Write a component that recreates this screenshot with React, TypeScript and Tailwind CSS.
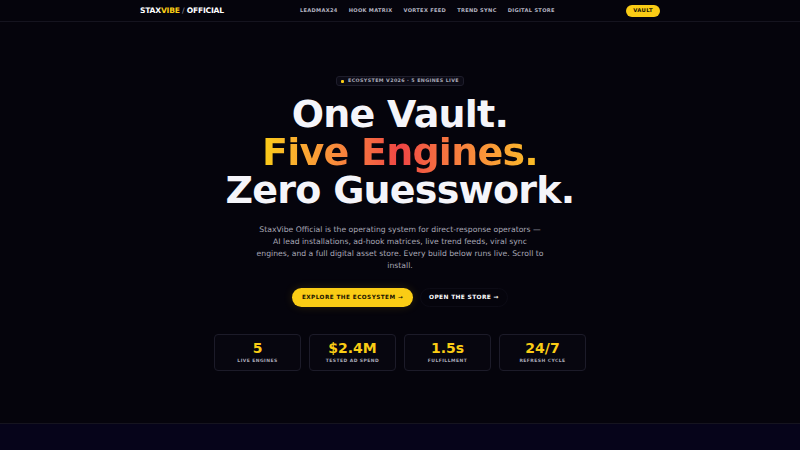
import React from "react";

const navLinks = ["LeadMax24", "Hook Matrix", "Vortex Feed", "Trend Sync", "Digital Store"];

const stats = [
  { value: "5", label: "Live Engines" },
  { value: "$2.4M", label: "Tested Ad Spend" },
  { value: "1.5s", label: "Fulfillment" },
  { value: "24/7", label: "Refresh Cycle" },
];

const App: React.FC = () => {
  return (
    <div className="min-h-[450px] w-full overflow-hidden bg-[#05040c] text-white font-['DejaVu_Sans',sans-serif]">
      {/* Top bar */}
      <header className="h-[22px] border-b border-[#15141f] flex items-center pl-[140px] pr-[140px]">
        <div className="w-[84px] whitespace-nowrap text-[7.6px] font-bold tracking-[-0.03em] leading-none">
          STAX<span className="text-[#facc15]">VIBE</span> <span className="text-[#8a8a99] font-normal">/</span> OFFICIAL
        </div>
        <nav className="flex items-center gap-[11px] ml-[76px]">
          {navLinks.map((l) => (
            <span key={l} className="text-[5.1px] font-bold uppercase tracking-[0.06em] text-[#b4b4c2] leading-none">
              {l}
            </span>
          ))}
        </nav>
        <div className="ml-auto h-[12px] px-[7px] rounded-full bg-[#facc15] flex items-center text-[5.3px] font-bold tracking-[0.06em] text-[#1a1400] leading-none">
          VAULT
        </div>
      </header>

      {/* Hero */}
      <section className="flex flex-col items-center pt-[54px] h-[401px]">
        <div className="flex items-center gap-[4px] h-[10px] px-[4px] rounded-[3px] border border-[#1e1d2b] bg-[#0c0b16] text-[4.8px] font-bold tracking-[0.08em] text-[#a9a9b8] leading-none">
          <span className="w-[3px] h-[3px] bg-[#facc15] rounded-[1px]" />
          ECOSYSTEM V2026 · 5 ENGINES LIVE
        </div>

        <h1 className="mt-[9px] text-center text-[38px] leading-[38px] font-bold tracking-[-0.02em]">
          <span className="block text-[#f5f5fa]">One Vault.</span>
          <span className="block">
            <span className="bg-gradient-to-r from-[#facc15] via-[#ef4444] to-[#fbbf24] bg-clip-text text-transparent">
              Five Engines.
            </span>
          </span>
          <span className="block text-[#f5f5fa]">Zero Guesswork.</span>
        </h1>

        <p className="mt-[15px] w-[291px] text-center text-[7.7px] leading-[12px] text-[#a7a7b6]">
          StaxVibe Official is the operating system for direct-response operators — AI lead installations, ad-hook matrices, live trend feeds, viral sync engines,{"\u00a0"}and a full digital asset store. Every build below runs live. Scroll to install.
        </p>

        <div className="mt-[16px] flex items-center gap-[7px]">
          <div className="h-[19px] w-[121px] rounded-full bg-[#facc15] flex items-center justify-center text-[5.7px] font-bold tracking-[0.08em] text-[#1a1400] leading-none shadow-[0_0_10px_rgba(250,204,21,0.15)]">
            EXPLORE THE ECOSYSTEM →
          </div>
          <div className="h-[19px] px-[8px] rounded-full border border-[#0c0b15] flex items-center text-[5.9px] font-bold tracking-[0.06em] text-white leading-none">
            OPEN THE STORE →
          </div>
        </div>

        <div className="mt-[27px] grid grid-cols-4 gap-[8px]">
          {stats.map((s) => (
            <div
              key={s.label}
              className="w-[87px] h-[37px] rounded-[4px] border border-[#1c1b29] bg-[#07060f] flex flex-col items-center justify-center"
            >
              <div className="text-[14px] font-bold text-[#facc15] leading-none">{s.value}</div>
              <div className="mt-[4px] text-[4.5px] font-bold uppercase tracking-[0.1em] text-[#a9a9b8] leading-none">
                {s.label}
              </div>
            </div>
          ))}
        </div>
      </section>

      <div className="h-[49px] border-t border-[#15141f] bg-[#06041a]" />
    </div>
  );
};

export default App;
